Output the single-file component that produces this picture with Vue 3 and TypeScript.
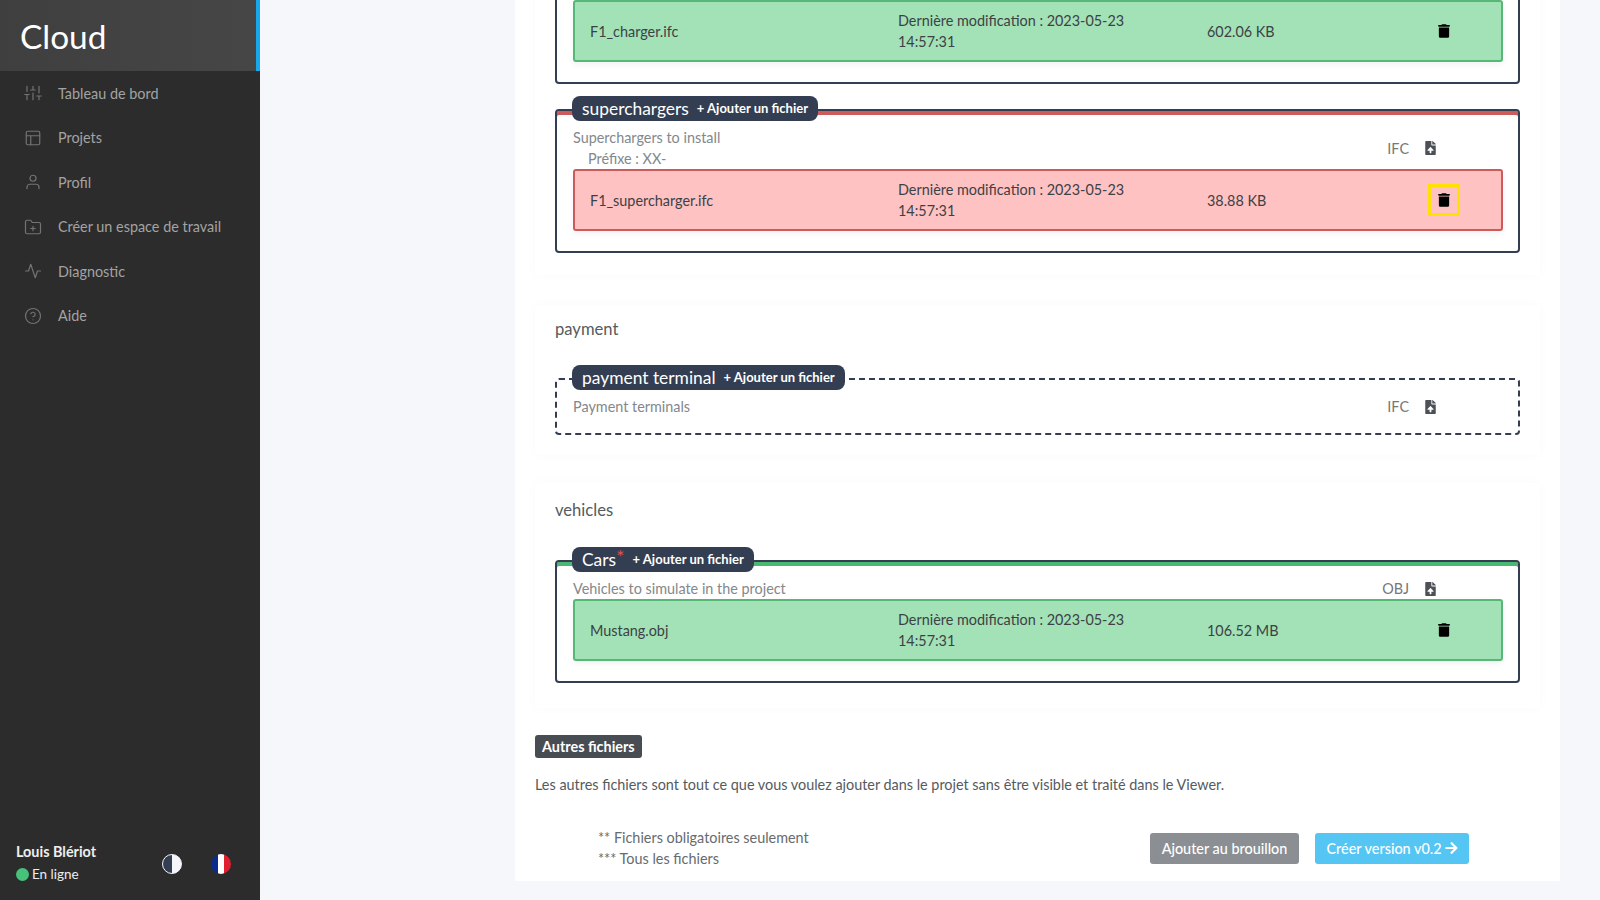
<script setup lang="ts">
const navItems = [
  { label: 'Tableau de bord', icon: 'sliders' },
  { label: 'Projets', icon: 'layout' },
  { label: 'Profil', icon: 'user' },
  { label: 'Créer un espace de travail', icon: 'folder' },
  { label: 'Diagnostic', icon: 'activity' },
  { label: 'Aide', icon: 'help' },
]
const trash = 'M135.2 17.7C140.6 6.8 151.7 0 163.8 0H284.2c12.1 0 23.2 6.8 28.6 17.7L320 32h96c17.7 0 32 14.3 32 32s-14.3 32-32 32H32C14.3 96 0 81.7 0 64S14.3 32 32 32h96l7.2-14.3zM32 128H416V448c0 35.3-28.7 64-64 64H96c-35.3 0-64-28.7-64-64V128z'
const upload = 'M224 136V0H24C10.7 0 0 10.7 0 24v464c0 13.3 10.7 24 24 24h336c13.3 0 24-10.7 24-24V160H248c-13.2 0-24-10.8-24-24zm65.18 216.01H224v80c0 8.84-7.16 16-16 16h-32c-8.84 0-16-7.16-16-16v-80H94.82c-14.28 0-21.41-17.29-11.27-27.36l96.42-95.7c6.65-6.61 17.39-6.61 24.04 0l96.42 95.7c10.15 10.07 3.03 27.36-11.25 27.36zM377 105L279.1 7c-4.5-4.5-10.6-7-17-7H256v128h128v-6.1c0-6.3-2.5-12.4-7-16.9z'
</script>

<template>
  <div class="app">
    <aside class="sidebar">
      <div class="brand">Cloud</div>
      <nav class="nav">
        <a v-for="item in navItems" :key="item.label" class="nav-item">
          <svg class="nav-icon" viewBox="0 0 24 24" fill="none" stroke="currentColor" stroke-width="1.6" stroke-linecap="round" stroke-linejoin="round">
            <template v-if="item.icon === 'sliders'">
              <path d="M4 21v-7M4 10V3M12 21v-9M12 8V3M20 21v-5M20 12V3M1 14h6M9 8h6M17 16h6" />
            </template>
            <template v-else-if="item.icon === 'layout'">
              <rect x="3" y="3" width="18" height="18" rx="2" />
              <path d="M3 9h18M9 21V9" />
            </template>
            <template v-else-if="item.icon === 'user'">
              <path d="M20 21v-2a4 4 0 0 0-4-4H8a4 4 0 0 0-4 4v2" />
              <circle cx="12" cy="7" r="4" />
            </template>
            <template v-else-if="item.icon === 'folder'">
              <path d="M22 19a2 2 0 0 1-2 2H4a2 2 0 0 1-2-2V5a2 2 0 0 1 2-2h5l2 3h9a2 2 0 0 1 2 2z" />
              <path d="M12 11v6M9 14h6" />
            </template>
            <template v-else-if="item.icon === 'activity'">
              <path d="M22 12h-4l-3 9L9 3l-3 9H2" />
            </template>
            <template v-else>
              <circle cx="12" cy="12" r="10" />
              <path d="M9.09 9a3 3 0 0 1 5.83 1c0 2-3 3-3 3M12 17h.01" />
            </template>
          </svg>
          <span>{{ item.label }}</span>
        </a>
      </nav>
      <div class="user">
        <div class="user-info">
          <div class="user-name">Louis Blériot</div>
          <div class="user-status"><i class="dot"></i>En ligne</div>
        </div>
        <div class="theme"></div>
        <div class="flag"></div>
      </div>
    </aside>

    <main class="main">
      <div class="card">
        <section class="section section-first">
          <div class="box box-first">
            <div class="file ok">
              <span>F1_charger.ifc</span>
              <span class="date">Dernière modification : 2023-05-23 14:57:31</span>
              <span>602.06 KB</span>
              <button class="del"><svg viewBox="0 0 448 512"><path :d="trash" /></svg></button>
            </div>
          </div>
          <div class="box box-red">
            <div class="tag"><b>superchargers</b><em>+ Ajouter un fichier</em></div>
            <div class="info">
              <div class="desc">
                <div>Superchargers to install</div>
                <div class="prefix">Préfixe : XX-</div>
              </div>
              <div class="type">IFC<svg viewBox="0 0 384 512"><path :d="upload" /></svg></div>
            </div>
            <div class="file bad">
              <span>F1_supercharger.ifc</span>
              <span class="date">Dernière modification : 2023-05-23 14:57:31</span>
              <span>38.88 KB</span>
              <button class="del focus"><svg viewBox="0 0 448 512"><path :d="trash" /></svg></button>
            </div>
          </div>
        </section>

        <section class="section section-payment">
          <h3>payment</h3>
          <div class="box box-dashed">
            <div class="tag"><b>payment terminal</b><em>+ Ajouter un fichier</em></div>
            <div class="info">
              <div class="desc">Payment terminals</div>
              <div class="type">IFC<svg viewBox="0 0 384 512"><path :d="upload" /></svg></div>
            </div>
          </div>
        </section>

        <section class="section section-vehicles">
          <h3>vehicles</h3>
          <div class="box box-green">
            <div class="tag"><b>Cars<sup>*</sup></b><em>+ Ajouter un fichier</em></div>
            <div class="info">
              <div class="desc">Vehicles to simulate in the project</div>
              <div class="type">OBJ<svg viewBox="0 0 384 512"><path :d="upload" /></svg></div>
            </div>
            <div class="file ok">
              <span>Mustang.obj</span>
              <span class="date">Dernière modification : 2023-05-23 14:57:31</span>
              <span>106.52 MB</span>
              <button class="del"><svg viewBox="0 0 448 512"><path :d="trash" /></svg></button>
            </div>
          </div>
        </section>

        <div class="others-badge">Autres fichiers</div>
        <p class="others-text">Les autres fichiers sont tout ce que vous voulez ajouter dans le projet sans être visible et traité dans le Viewer.</p>

        <div class="actions">
          <div class="notes">
            <div>** Fichiers obligatoires seulement</div>
            <div>*** Tous les fichiers</div>
          </div>
          <div class="buttons">
            <button class="btn grey">Ajouter au brouillon</button>
            <button class="btn blue">Créer version v0.2
              <svg viewBox="0 0 448 512"><path d="M190.5 66.9l22.2-22.2c9.4-9.4 24.6-9.4 33.9 0L441 239c9.4 9.4 9.4 24.6 0 33.9L246.6 467.3c-9.4 9.4-24.6 9.4-33.9 0l-22.2-22.2c-9.5-9.5-9.3-25 .4-34.3L311.4 296H24c-13.3 0-24-10.7-24-24v-32c0-13.3 10.7-24 24-24h287.4L190.9 101.2c-9.8-9.3-10-24.8-.4-34.3z" /></svg>
            </button>
          </div>
        </div>
      </div>
    </main>
  </div>
</template>

<style>
html, body { margin: 0; background: #f5f7fb; }
</style>

<style scoped>
.app {
  display: flex;
  width: 1600px;
  height: 900px;
  overflow: hidden;
  font-family: Lato, "Noto Sans", sans-serif;
  font-size: 14.4px;
  line-height: 21px;
  color: #555b60;
  background: #f5f7fb;
}
.sidebar {
  width: 260px;
  flex: none;
  display: flex;
  flex-direction: column;
  background: #2c2c2c;
}
.brand {
  height: 71px;
  box-sizing: border-box;
  padding-left: 20px;
  border-right: 4px solid #17a8ec;
  background: linear-gradient(90deg, #3f3f3f, #464646);
  color: #fff;
  font-size: 33.4px;
  line-height: 72px;
}
.nav { flex: 1; }
.nav-item {
  display: flex;
  align-items: center;
  height: 44.5px;
  color: #a3a3a3;
}
.nav-icon {
  width: 18px;
  height: 18px;
  margin: 0 16px 0 24px;
  color: #737373;
}
.user {
  display: flex;
  align-items: center;
  height: 72px;
  padding: 0 0 0 16px;
  color: #eee;
}
.user-info { width: 146px; padding-bottom: 3px; }
.user-name { font-weight: 700; font-size: 14.4px; }
.user-status { display: flex; align-items: center; margin-top: 2px; font-size: 13.5px; }
.dot {
  width: 13px;
  height: 13px;
  margin-right: 3px;
  border-radius: 50%;
  background: #48c27a;
}
.theme, .flag {
  width: 20px;
  height: 20px;
  border-radius: 50%;
}
.theme {
  box-sizing: border-box;
  border: 1px solid #f4f6fa;
  background: linear-gradient(90deg, #343e52 50%, #f4f6fa 50%);
}
.flag {
  margin-left: 29px;
  background: linear-gradient(90deg, #0a2a8c 33.3%, #fff 33.3%, #fff 66.6%, #e01f2f 66.6%);
}
.main {
  flex: 1;
  height: 900px;
  box-sizing: border-box;
  display: flex;
  flex-direction: column;
  justify-content: flex-end;
  padding: 0 40px 19px 255px;
  overflow: hidden;
}
.card {
  flex: none;
  box-sizing: border-box;
  padding: 0 20px 12px;
  background: #fff;
}
.section {
  padding: 0 20px;
  background: #fff;
  box-shadow: 0 0 12px rgba(40, 60, 90, 0.025);
}
.section-first { padding-bottom: 22px; margin-bottom: 30px; }
.section-payment { padding-top: 13px; padding-bottom: 20px; margin-bottom: 28px; }
.section-vehicles { padding-top: 16px; padding-bottom: 25px; margin-bottom: 27px; }
h3 {
  margin: 0 0 38px;
  font-size: 16.6px;
  font-weight: 400;
  line-height: 22px;
  color: #555b60;
}
.section-vehicles h3 { margin-bottom: 39px; }
.box {
  box-sizing: border-box;
  padding: 0 15px 20px 16px;
  border: 2px solid #343e52;
  border-radius: 4px;
  background: #fff;
}
.box-first { padding-top: 20px; margin-bottom: 25px; }
.box-red { box-shadow: inset 0 4px 0 #cc5c5c; }
.box-green { box-shadow: inset 0 4px 0 #48b873; }
.box-dashed { border-style: dashed; padding-bottom: 16px; }
.tag {
  display: flex;
  align-items: center;
  width: fit-content;
  height: 25px;
  margin: -15px 0 0 -1px;
  padding: 0 10px;
  border-radius: 8px;
  background: #343e52;
  color: #fff;
}
.tag b { font-size: 17.4px; font-weight: 400; white-space: nowrap; }
.tag sup { color: #d9534f; font-size: 20px; line-height: 0; vertical-align: 2px; }
.tag em { margin-left: 8px; font-size: 13px; font-weight: 700; font-style: normal; white-space: nowrap; }
.info {
  display: flex;
  justify-content: space-between;
  align-items: center;
  padding: 6px 67px 0 0;
  color: #83888c;
}
.prefix { padding-left: 15px; }
.type {
  display: flex;
  align-items: center;
  gap: 16px;
  color: #777;
}
.type svg {
  width: 11px;
  height: 14px;
  fill: #4d5157;
}
.file {
  display: grid;
  grid-template-columns: 308px 309px 221px 32px;
  align-items: center;
  box-sizing: border-box;
  height: 62px;
  padding-left: 15px;
  border: 2px solid;
  border-radius: 3px;
  box-shadow: 0 3px 6px rgba(0, 0, 0, 0.05);
  color: #3c4146;
}
.ok { background: #a3e2b6; border-color: #55b877; }
.bad { background: #ffc2c2; border-color: #cc5c5c; }
.date { max-width: 240px; }
.del {
  display: flex;
  align-items: center;
  justify-content: center;
  width: 32px;
  height: 32px;
  padding: 0;
  border: 3px solid transparent;
  background: none;
}
.del.focus { border-color: #ffe000; }
.del svg { width: 12px; height: 14px; fill: #000; }
.others-badge {
  display: table;
  height: 23px;
  padding: 0 7px;
  border-radius: 3px;
  background: #484c53;
  color: #fff;
  font-weight: 700;
  line-height: 23px;
}
.others-text { margin: 16px 0 0; }
.actions {
  display: flex;
  justify-content: space-between;
  align-items: center;
  margin-top: 32px;
  padding: 0 71px 0 63px;
}
.notes { color: #666b70; }
.buttons { display: flex; gap: 16px; }
.btn {
  display: flex;
  align-items: center;
  justify-content: center;
  height: 31px;
  border: 0;
  border-radius: 3px;
  color: #fff;
  font: inherit;
  font-weight: 500;
}
.grey { width: 149px; background: #8b8f94; }
.blue { width: 154px; background: #55c5f4; }
.blue svg { width: 13px; height: 14px; margin-left: 3px; fill: #fff; }
</style>
